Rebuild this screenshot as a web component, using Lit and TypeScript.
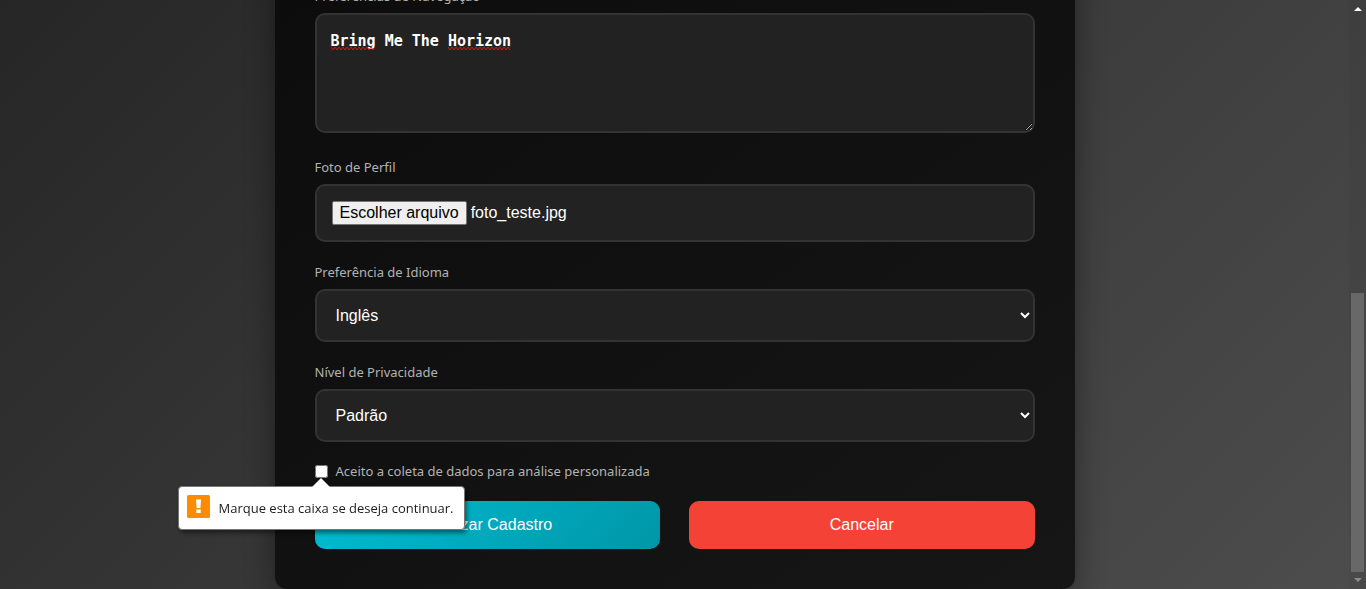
import { LitElement, html, css, svg } from "lit";
import { customElement, state } from "lit/decorators.js";

const zigzag = (from: number, to: number) => {
  let d = `M${from} 1`;
  for (let x = from + 2, low = true; x <= to; x += 2, low = !low) {
    d += `L${x} ${low ? 4 : 1}`;
  }
  return d;
};

@customElement("validation-bubble")
export class ValidationBubble extends LitElement {
  static styles = css`
    :host {
      display: block;
      filter: drop-shadow(2px 3px 2px rgba(0, 0, 0, 0.45));
    }
    .bubble {
      position: relative;
      display: flex;
      align-items: flex-start;
      gap: 9px;
      padding: 8px 10px 8px 8px;
      background: #fff;
      border: 1px solid #767676;
      border-radius: 4px;
      color: #1b1b1b;
      font: 13px/26px "Open Sans", sans-serif;
      white-space: nowrap;
    }
    .arrow {
      position: absolute;
      left: 133px;
      top: -9px;
      display: block;
    }
    .icon {
      flex: none;
      display: block;
    }
  `;
  render() {
    return html`<div class="bubble" role="alert">
      <svg class="arrow" width="18" height="9" viewBox="0 0 18 9"><path d="M0 9 9 0l9 9z" fill="#fff" /></svg>
      <svg class="icon" width="23" height="23" viewBox="0 0 23 23">
        <rect width="23" height="23" rx="1.5" fill="#ff8c00" />
        <path d="M9 4.5h5l-.6 8.5H9.6zM9.3 14.6h4.4v3.4H9.3z" fill="#fff" />
      </svg>
      <span><slot></slot></span>
    </div>`;
  }
}

@customElement("app-root")
export class AppRoot extends LitElement {
  @state() fileName = "foto_teste.jpg";

  static styles = css`
    :host {
      display: flex;
      height: 100vh;
      overflow: hidden;
      background: linear-gradient(135deg, #262626, #4d4d4d);
      font-family: "Noto Sans", sans-serif;
    }
    *,
    *::before {
      box-sizing: border-box;
    }
    .page {
      flex: 1;
      display: flex;
      flex-direction: column;
      align-items: center;
      justify-content: flex-end;
      min-width: 0;
    }
    .card {
      display: flex;
      flex-direction: column;
      gap: 20px;
      width: 100%;
      max-width: 800px;
      padding: 40px;
      border-radius: 12px;
      background: linear-gradient(145deg, #0c0c0c, #161616);
      box-shadow: 0 10px 30px rgba(0, 0, 0, 0.4);
    }
    .field {
      display: flex;
      flex-direction: column;
      gap: 7px;
    }
    .label,
    .check {
      color: #b3b3b3;
      font-size: 13px;
      line-height: 20px;
    }
    .area {
      position: relative;
      padding-bottom: 4px;
    }
    .control {
      display: block;
      width: 100%;
      margin: 0;
      padding: 15px;
      border: 2px solid #333;
      border-radius: 10px;
      background: #222;
      color: #fff;
      font: 16px/18px "Liberation Sans", Arial, sans-serif;
      outline: none;
    }
    textarea.control {
      height: 120px;
      padding: 16px 14px;
      font: bold 15px/20px "DejaVu Sans Mono", monospace;
      resize: vertical;
    }
    .spelling {
      position: absolute;
      left: 16px;
      top: 33px;
      pointer-events: none;
    }
    select.control {
      height: 53px;
    }
    .file {
      position: relative;
      display: flex;
      align-items: center;
      gap: 4px;
    }
    .file input {
      position: absolute;
      inset: 0;
      width: 100%;
      opacity: 0;
    }
    .pick {
      padding: 2px 7px;
      border: 1px solid #767676;
      border-radius: 2px;
      background: #efefef;
      color: #000;
      line-height: 18px;
    }
    .check {
      position: relative;
      display: flex;
      align-items: center;
      gap: 8px;
      line-height: 19px;
    }
    .check input {
      width: 13px;
      height: 13px;
      margin: 0;
    }
    .tip {
      position: absolute;
      left: -137px;
      top: 24px;
      z-index: 1;
    }
    .actions {
      display: flex;
      justify-content: space-between;
    }
    .btn {
      width: 48%;
      padding: 15px;
      border: 0;
      border-radius: 10px;
      color: #fff;
      font: 16px/18px "Liberation Sans", Arial, sans-serif;
      cursor: pointer;
    }
    .send {
      background: linear-gradient(135deg, #00bcd4, #0097a7);
    }
    .cancel {
      background: #f44336;
    }
    .scroll {
      display: flex;
      flex-direction: column;
      align-items: center;
      justify-content: space-between;
      width: 17px;
      padding: 7px 0;
      background: rgba(0, 0, 0, 0.04);
    }
    .thumb {
      width: 13px;
      height: 48.5%;
      margin-top: auto;
      margin-bottom: 6px;
      background: #686868;
    }
  `;

  private pickFile(e: Event) {
    const file = (e.target as HTMLInputElement).files?.[0];
    if (file) this.fileName = file.name;
  }

  render() {
    return html`
      <main class="page">
        <form class="card" @submit=${(e: Event) => e.preventDefault()}>
          <div class="field">
            <label class="label" for="nav">Preferências de Navegação</label>
            <div class="area">
              <textarea class="control" id="nav" spellcheck="false" .value=${"Bring Me The Horizon"}></textarea>
              <svg class="spelling" width="180" height="5" fill="none" stroke="#e01010" aria-hidden="true">
                ${svg`<path d=${zigzag(0, 45)} /><path d=${zigzag(117, 180)} />`}
              </svg>
            </div>
          </div>
          <div class="field">
            <label class="label" for="photo">Foto de Perfil</label>
            <div class="control file">
              <span class="pick">Escolher arquivo</span>
              <span>${this.fileName}</span>
              <input id="photo" type="file" @change=${this.pickFile} />
            </div>
          </div>
          <div class="field">
            <label class="label" for="lang">Preferência de Idioma</label>
            <select class="control" id="lang">
              <option>Inglês</option>
            </select>
          </div>
          <div class="field">
            <label class="label" for="privacy">Nível de Privacidade</label>
            <select class="control" id="privacy">
              <option>Padrão</option>
            </select>
          </div>
          <div class="check">
            <input id="consent" type="checkbox" />
            <label for="consent">Aceito a coleta de dados para análise personalizada</label>
            <validation-bubble class="tip">Marque esta caixa se deseja continuar.</validation-bubble>
          </div>
          <div class="actions">
            <button class="btn send" type="submit">Finalizar Cadastro</button>
            <button class="btn cancel" type="button">Cancelar</button>
          </div>
        </form>
      </main>
      <div class="scroll" aria-hidden="true">
        <svg width="8" height="4" viewBox="0 0 8 4"><path d="M0 4 4 0l4 4z" fill="#fff" /></svg>
        <div class="thumb"></div>
        <svg width="8" height="4" viewBox="0 0 8 4"><path d="M0 0h8L4 4z" fill="#8a8a8a" /></svg>
      </div>
    `;
  }
}
